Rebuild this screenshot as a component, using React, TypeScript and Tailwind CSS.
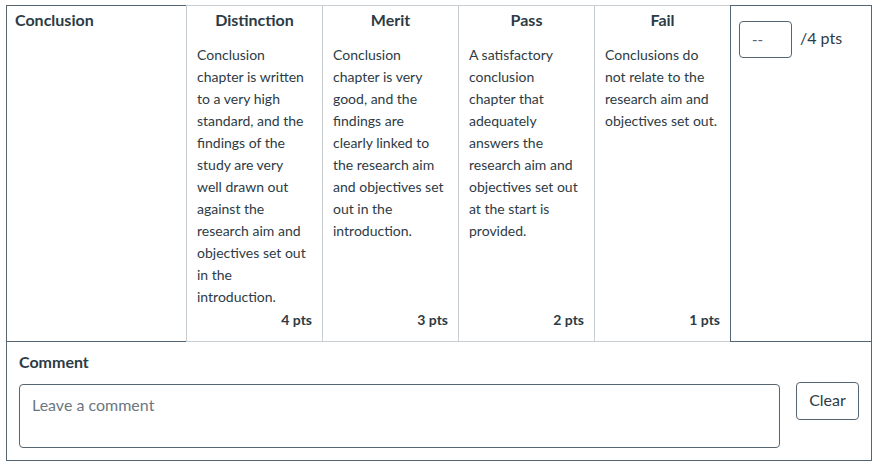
const ratings = [
  {
    title: 'Distinction',
    text: 'Conclusion chapter is written to a very high standard, and the findings of the study are very well drawn out against the research aim and objectives set out in the introduction.',
    pts: '4 pts',
  },
  {
    title: 'Merit',
    text: 'Conclusion chapter is very good, and the findings are clearly linked to the research aim and objectives set out in the introduction.',
    pts: '3 pts',
  },
  {
    title: 'Pass',
    text: 'A satisfactory conclusion chapter that adequately answers the research aim and objectives set out at the start is provided.',
    pts: '2 pts',
  },
  {
    title: 'Fail',
    text: 'Conclusions do not relate to the research aim and objectives set out.',
    pts: '1 pts',
  },
];

export default function App() {
  return (
    <div
      className="min-h-screen bg-white pl-[6px] pt-[5px] text-[#2d3b45]"
      style={{ fontFamily: 'Lato, "Noto Sans", sans-serif' }}
    >
      <div className="w-[866px] border-x border-b border-[#556572]">
        <div className="flex">
          {/* criterion */}
          <div className="h-[337px] w-[179px] border-y border-[#556572] pl-[8px] pt-[2px]">
            <div className="text-[16px] font-bold leading-6">Conclusion</div>
          </div>

          {/* ratings */}
          {ratings.map((r) => (
            <div
              key={r.title}
              className="flex h-[337px] w-[136px] flex-col border-y border-l border-y-[#c7cdd1] border-l-[#c7cdd1] px-[10px] pb-[10px] pt-[2px]"
            >
              <div className="text-center text-[16px] font-bold leading-6">{r.title}</div>
              <p className="mt-[12px] w-[113px] text-[14px] leading-[22px]">{r.text}</p>
              <div className="mt-auto text-right text-[14px] font-bold leading-[22px]">{r.pts}</div>
            </div>
          ))}

          {/* points */}
          <div className="h-[337px] w-[141px] border-y border-l border-[#556572] pl-[8px] pt-[15px]">
            <div className="flex items-center gap-[8px]">
              <div className="flex h-[37px] w-[53px] items-center rounded-[4px] border border-[#556572] pl-[12px] text-[15px] text-[#556572]">
                --
              </div>
              <span className="-mt-[4px] text-[16px] leading-6">/4 pts</span>
            </div>
          </div>
        </div>

        {/* comment */}
        <div className="px-[12px] pb-[12px] pt-[8px]">
          <div className="text-[16px] font-bold leading-6">Comment</div>
          <div className="mt-[10px] flex items-start gap-[16px]">
            <div className="h-[64px] w-[761px] rounded-[4px] border border-[#556572] px-[12px] pt-[8px] text-[16px] leading-6 text-[#6b7780]">
              Leave a comment
            </div>
            <button className="-mt-[2px] h-[38px] w-[63px] rounded-[4px] border border-[#556572] bg-white pb-[2px] text-[16px] leading-6 text-[#2d3b45]">
              Clear
            </button>
          </div>
        </div>
      </div>
    </div>
  );
}
